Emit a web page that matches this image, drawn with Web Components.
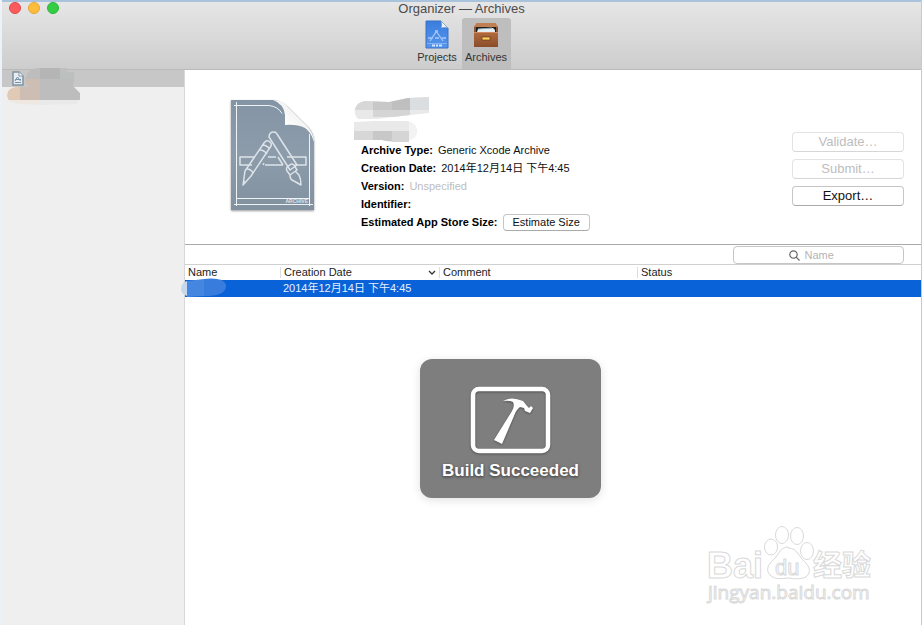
<!DOCTYPE html>
<html lang="en">
<head>
<meta charset="utf-8">
<title>Organizer — Archives</title>
<style>
html, body { height: 100%; }
body { margin: 0; overflow: hidden; background: #fff; color: #111; font: 11px/18px "Liberation Sans", "Noto Sans CJK SC", sans-serif; }
</style>
</head>
<body>
<organizer-window>
  <window-toolbar slot="toolbar" heading="Organizer — Archives">
    <toolbar-item label="Projects">
      <svg width="24" height="30" viewBox="0 0 24 30">
        <defs><linearGradient id="pb" x2="0" y2="1"><stop stop-color="#397dde"/><stop offset="1" stop-color="#5796ec"/></linearGradient></defs>
        <path d="M1 1h15l7 7v20H1z" fill="url(#pb)" stroke="#3971c4"/>
        <path d="M16 1c1 3 1 5 0 7 2-1 5-1 7 0z" fill="#f5f8fc" stroke="#8097b8" stroke-width=".5"/>
        <g fill="none" stroke="#a4c8fa" stroke-width="1.300"><path d="M5 21l6-9M11 11l7 10M3 18h5m2 0h4m3 0h4M10 11h3"/></g>
        <path d="M2 23.500h20" stroke="#80b2f5"/>
        <path d="M7 25.500h3m1 0h2m1 0h3" stroke="#d5e6ff" stroke-width="2"/>
      </svg>
    </toolbar-item>
    <toolbar-item label="Archives" selected>
      <svg width="26" height="30" viewBox="0 0 26 30">
        <defs><linearGradient id="dr" x2="0" y2="1"><stop stop-color="#b16b3e"/><stop offset="1" stop-color="#8c4c2a"/></linearGradient></defs>
        <path d="M4 3h18l3 4v20H1V7z" fill="#8a5533"/>
        <path d="M4 3h18l3 4H1z" fill="#bf7f52"/>
        <rect x="3" y="7" width="20" height="6" fill="#241c18"/>
        <path d="M4 12l1-3 15-1 2 2v3H4z" fill="#e5eef3"/>
        <path d="M5 9l14-1" stroke="#83a8bb"/>
        <rect x="1" y="12" width="24" height="15" rx="1" fill="url(#dr)"/>
        <path d="M1 12.500h24" stroke="#ce895e"/>
        <rect x="9" y="17" width="8" height="3" fill="#ffd558" stroke="#63391d" stroke-width=".7"/>
      </svg>
    </toolbar-item>
  </window-toolbar>
  <project-sidebar slot="sidebar"></project-sidebar>
  <archive-details slot="main">
    <detail-row label="Archive Type:">Generic Xcode Archive</detail-row>
    <detail-row label="Creation Date:">2014年12月14日 下午4:45</detail-row>
    <detail-row label="Version:" muted>Unspecified</detail-row>
    <detail-row label="Identifier:"></detail-row>
    <detail-row label="Estimated App Store Size:"><mac-button>Estimate Size</mac-button></detail-row>
    <mac-button slot="actions" large disabled>Validate…</mac-button>
    <mac-button slot="actions" large disabled>Submit…</mac-button>
    <mac-button slot="actions" large>Export…</mac-button>
  </archive-details>
  <filter-bar slot="main"></filter-bar>
  <archive-table slot="main"></archive-table>
</organizer-window>
<build-hud>Build Succeeded</build-hud>
<site-watermark></site-watermark>

<script>
const define = (name, markup, setup) => {
  const template = document.createElement('template');
  template.innerHTML = markup;
  customElements.define(name, class extends HTMLElement {
    constructor() {
      super();
      this.attachShadow({ mode: 'open' }).append(template.content.cloneNode(true));
    }
    connectedCallback() { if (setup) setup(this, this.shadowRoot); }
  });
};

define('organizer-window', `
<style>
:host { display: flex; flex-direction: column; height: 100vh; box-sizing: border-box; border-left: 2px solid #edf2fa; border-right: 1px solid #c9c9c9; }
.body { display: flex; flex: 1; min-height: 0; }
aside { flex: none; width: 182px; background: #efefef; border-right: 1px solid #d8d8d8; }
main { flex: 1; min-width: 0; display: flex; flex-direction: column; background: #fff; }
</style>
<slot name="toolbar"></slot>
<div class="body"><aside><slot name="sidebar"></slot></aside><main><slot name="main"></slot></main></div>`);

define('window-toolbar', `
<style>
:host { display: flex; flex-direction: column; position: relative; height: 70px; box-sizing: border-box; border-top: 2px solid #a8c3db; border-bottom: 1px solid #bababa; background: linear-gradient(#e6e6e6, #cdcdcd); }
.lights { position: absolute; left: 7px; top: 0; display: flex; gap: 7px; }
.lights button { width: 12px; height: 12px; padding: 0; border: 1px solid #e2484b; border-radius: 50%; background: #fc5b5d; }
.lights button:nth-child(2) { border-color: #e6a532; background: #fdbd3b; }
.lights button:nth-child(3) { border-color: #2cb63a; background: #34cd44; }
h1 { margin: 0; text-align: center; font: 13px/14px "Liberation Sans", sans-serif; color: #4b4b4b; }
nav { display: flex; justify-content: center; flex: 1; }
</style>
<div class="lights"><button aria-label="Close"></button><button aria-label="Minimize"></button><button aria-label="Zoom"></button></div>
<h1></h1><nav><slot></slot></nav>`, (el, root) => {
  root.querySelector('h1').textContent = el.getAttribute('heading');
});

define('toolbar-item', `
<style>
:host { display: flex; padding-top: 2px; }
button { display: flex; flex-direction: column; align-items: center; min-width: 49px; padding: 2px 2px 0; border: 0; border-radius: 3px 3px 0 0; background: none; color: #333; font: 11px/15px "Liberation Sans", sans-serif; white-space: nowrap; }
:host([selected]) button { background: #bebebe; }
::slotted(svg) { display: block; }
</style>
<button><slot></slot><span></span></button>`, (el, root) => {
  root.querySelector('span').textContent = el.getAttribute('label');
});

define('project-sidebar', `
<style>
:host { display: block; position: relative; }
.item { display: flex; align-items: center; height: 17px; padding-left: 10px; background: #c7c7c7; }
.smudge { position: absolute; left: 2px; top: -3px; }
</style>
<div class="item"><svg width="12" height="15" viewBox="0 0 12 15"><path d="M1 1h6l4 4v9H1z" fill="#e6ecf1" stroke="#8093a3" stroke-width="1.500"/><path d="M7 1v4h4" fill="#fff" stroke="#8093a3"/><path d="M3 10l2.500-4 3 4M3 8.500h6M3 11.500h6" fill="none" stroke="#7890a3"/></svg></div>
<svg class="smudge" width="78" height="42" viewBox="0 0 78 42">
  <defs><clipPath id="c"><path d="M21 13q2-11 12-12h30l1 4h6q1 6 0 8l-1 6 7 7v7h-2l-1 4-38 1-20-1-10-3-2-5q0-8 9-9h14q-4-2-5-7z"/></clipPath></defs>
  <g clip-path="url(#c)"><path fill="#efe8e2" d="M0 32h40v10H0z"/><path fill="#e9e9e9" d="M36 32h42v10H36z"/>
  <path fill="#bdbdbd" d="M20 0h16v13H20z"/><path fill="#b5b5b5" d="M36 0h20v13H36z"/><path fill="#bcc0bf" d="M56 0h22v13H56z"/>
  <path fill="#cdbdb2" d="M16 12h20v21H16z"/><path fill="#bdbdbd" d="M36 12h42v21H36z"/><path fill="#e0c9b5" d="M0 18h16v15H0z"/></g>
</svg>`);

define('archive-details', `
<style>
:host { display: flex; position: relative; align-items: flex-start; min-height: 175px; box-sizing: border-box; padding: 28px 17px 12px 44px; border-bottom: 1px solid #aaa; }
.doc { flex: none; }
dl { flex: 1; margin: 43px 0 0 44px; }
.actions { display: flex; flex-direction: column; gap: 7px; width: 112px; margin-top: 34px; }
.smudge { position: absolute; left: 169px; top: 27px; }
</style>
<svg class="doc" width="88" height="116" viewBox="0 0 88 116">
  <defs>
    <linearGradient id="g" x2="0" y2="1"><stop stop-color="#8394a4"/><stop offset=".5" stop-color="#8d9cab"/><stop offset="1" stop-color="#8191a0"/></linearGradient>
    <linearGradient id="f" x1="0" y1="1" x2=".8" y2=".1"><stop stop-color="#cfcfcf"/><stop offset=".4" stop-color="#fff"/><stop offset="1" stop-color="#e8e8e8"/></linearGradient>
    <filter id="s" x="-10%" y="-10%" width="120%" height="120%"><feDropShadow dx="0" dy="1" stdDeviation="1.200" flood-opacity=".4"/></filter>
  </defs>
  <path d="M2 2h42q9 1 15 7l18 18q8 7 8 17v68H2z" fill="url(#g)" filter="url(#s)"/>
  <path d="M44 2q11 4 12 15v10q12-1 20 3 6 4 9 14 0-9-8-17L59 9q-6-7-15-7z" fill="url(#f)"/>
  <g fill="none" stroke="#f0f3f6"><path d="M7.500 4v104M5 7.500h35q9 1 13 8M80.500 36v72M5 106.500h79M7 100.500h73"/></g>
  <g fill="none" stroke="#dce3e9" stroke-width="1.500" stroke-linejoin="round">
    <path d="M25 59H11v8h12M39 59h8M36 67h18M58 59h19v8H66M34 67l1-2M49 59l5 8"/>
    <path d="M35 45q3-4 6-1 2 2 1 4L22 78 14 87l2-14zM34 47q3 0 7 4M31 52q4 0 7 4M18 71q4 0 6 4M14 83l2 1"/>
    <path d="M40 39q0-5 5-5 2 0 3 2l20 31-7 5zM61 67q-5 2-3 6l3 4 7-5-3-5q-2-2-4 0M61 77q0 5 4 6l7 4q0-6-2-10l-4-4"/>
  </g>
  <text x="79" y="105" text-anchor="end" font-family="Liberation Sans, sans-serif" font-size="5" font-weight="bold" fill="#dce3e9">ARCHIVE</text>
</svg>
<svg class="smudge" width="78" height="48" viewBox="0 0 78 48">
  <defs><clipPath id="c"><path d="M1 12q2-7 10-8l24 1 19-4 21-1v16l-19 2-34 4H4q-4-4-3-10zM0 25l20-1h34q9 3 9 10t-8 9v2H36l-8-2H0z"/></clipPath></defs>
  <g clip-path="url(#c)"><path fill="#e9e9e9" d="M0 0h78v48H0z"/><path fill="#d7d7d7" d="M0 0h19v13H0zM0 34h19v10H0z"/><path fill="#c8c8c8" d="M19 0h19v13H19zM19 34h19v10H19z"/><path fill="#bfbfbf" d="M38 0h18v13H38z"/><path fill="#d5d5d5" d="M19 13h37v7H19zM38 34h17v11H38z"/><path fill="#dbdee0" d="M56 0h20v13H56z"/><path fill="#f3f3f3" d="M55 24h14v21H55z"/></g>
</svg>
<dl><slot></slot></dl>
<div class="actions"><slot name="actions"></slot></div>`);

define('detail-row', `
<style>
:host { display: flex; align-items: center; gap: 5px; height: 18px; white-space: nowrap; line-height: 18px; }
dt { font-weight: bold; color: #000; }
dd { margin: 0; }
:host([muted]) dd { color: #bdbdbd; }
</style>
<dt></dt><dd><slot></slot></dd>`, (el, root) => {
  root.querySelector('dt').textContent = el.getAttribute('label');
});

define('mac-button', `
<style>
:host { display: block; }
button { display: block; width: 100%; height: 17px; padding: 0 9px; border: 1px solid #c6c6c6; border-bottom-color: #aaa; border-radius: 4px; background: #fff; color: #111; font: 11px/15px "Liberation Sans", sans-serif; }
:host([large]) button { height: 20px; font-size: 13px; line-height: 18px; }
button:disabled { color: #bdbdbd; border-color: #e3e3e3; border-bottom-color: #d6d6d6; }
</style>
<button><slot></slot></button>`, (el, root) => {
  root.querySelector('button').disabled = el.hasAttribute('disabled');
});

define('filter-bar', `
<style>
:host { display: flex; justify-content: flex-end; height: 20px; box-sizing: border-box; padding: 1px 17px 0 0; border-bottom: 1px solid #d0d0d0; }
label { display: flex; align-items: center; justify-content: center; gap: 5px; width: 171px; height: 18px; box-sizing: border-box; border: 1px solid #c6c6c6; border-radius: 4px; background: #fff; }
input { width: 44px; height: 14px; padding: 0; border: 0; outline: 0; background: none; font: 11px/14px "Liberation Sans", sans-serif; }
input::placeholder { color: #b4b4b4; opacity: 1; }
</style>
<label><svg width="11" height="11" viewBox="0 0 11 11" fill="none" stroke="#666" stroke-width="1.200"><circle cx="4.500" cy="4.500" r="3.700"/><path d="M7.200 7.200l3.300 3.300"/></svg><input type="text" placeholder="Name" aria-label="Filter by name"></label>`);

define('archive-table', `
<style>
:host { display: block; position: relative; }
table { width: 100%; table-layout: fixed; border-collapse: collapse; font-size: 11px; }
th, td { padding: 0 0 0 3px; text-align: left; font-weight: normal; white-space: nowrap; }
th { height: 15px; line-height: 15px; color: #222; }
th + th { padding-left: 4px; background: linear-gradient(#ddd, #ddd) 0 2px / 1px 11px no-repeat; }
th > div { display: flex; align-items: center; justify-content: space-between; padding-right: 3px; }
td { height: 17px; line-height: 17px; color: #e4efff; background: #0a62d8; }
col.name { width: 95px; } col.date { width: 159px; } col.comment { width: 198px; }
.smudge { position: absolute; left: -4px; top: 13px; }
</style>
<table>
<colgroup><col class="name"><col class="date"><col class="comment"><col></colgroup>
<thead><tr><th>Name</th><th><div>Creation Date <svg width="8" height="6" viewBox="0 0 8 6"><path d="M1 1l3 3 3-3" fill="none" stroke="#333" stroke-width="1.300"/></svg></div></th><th>Comment</th><th>Status</th></tr></thead>
<tbody><tr><td></td><td>2014年12月14日 下午4:45</td><td></td><td></td></tr></tbody>
</table>
<svg class="smudge" width="46" height="20" viewBox="0 0 46 20"><path d="M6 3Q0 5 0 11q0 5 6 7z" fill="#c7d8ec"/><path d="M6 3l17-2v17l-17 1z" fill="#4486e0"/><path d="M23 1q20-2 22 6 1 11-22 11z" fill="#387ddd"/></svg>`);

define('build-hud', `
<style>
:host { position: absolute; left: 420px; top: 359px; display: flex; flex-direction: column; align-items: center; gap: 4px; width: 181px; padding: 26px 0 15px; border-radius: 12px; background: #7e7e7e; box-shadow: 0 2px 10px rgba(0,0,0,.12); color: #fff; font: bold 17px/24px "Liberation Sans", sans-serif; text-shadow: 0 1px 3px rgba(0,0,0,.6); }
svg { display: block; filter: drop-shadow(0 1px 1px rgba(0,0,0,.35)); }
</style>
<svg width="82" height="70" viewBox="0 0 82 70"><rect x="3" y="4" width="75" height="62" rx="6" fill="none" stroke="#fff" stroke-width="4.500"/><path fill="#fff" d="M33 16q8-5 20 0l4 5 2 2 2-2 2 2-3 5-5-2-1-3-4-1q-4 3-6 9L32 59l-8-4 18-29q3-5 1-9-4-2-10-1z"/></svg>
<span><slot></slot></span>`);

define('site-watermark', `
<style>
:host { position: absolute; right: 42px; bottom: 16px; }
svg { display: block; }
</style>
<svg width="174" height="84" viewBox="0 0 174 84" fill="#fff" stroke="#d9d9d9" stroke-width="1">
  <g font-family="Liberation Sans, Noto Sans CJK SC, sans-serif">
  <text x="1" y="53" font-size="36" font-weight="bold">Bai</text>
  <ellipse cx="65" cy="22" rx="6.500" ry="8"/><ellipse cx="76" cy="10" rx="6.500" ry="8.500"/><ellipse cx="91" cy="11" rx="6.500" ry="8.500"/><ellipse cx="101" cy="26" rx="6.500" ry="8.500"/>
  <path d="M82 23q7 0 11 7 3 5 7 8 7 8 0 14-6 3-18 1-12 2-17-2-7-6 0-14 5-4 7-8 4-7 10-7z"/>
  <text x="69" y="50" font-size="22">du</text>
  <text x="107" y="51" font-size="29" font-weight="bold">经验</text></g>
  <text x="2" y="74" font-size="19" font-family="Open Sans, sans-serif">jingyan.baidu.com</text>
</svg>`);
</script>
</body>
</html>
